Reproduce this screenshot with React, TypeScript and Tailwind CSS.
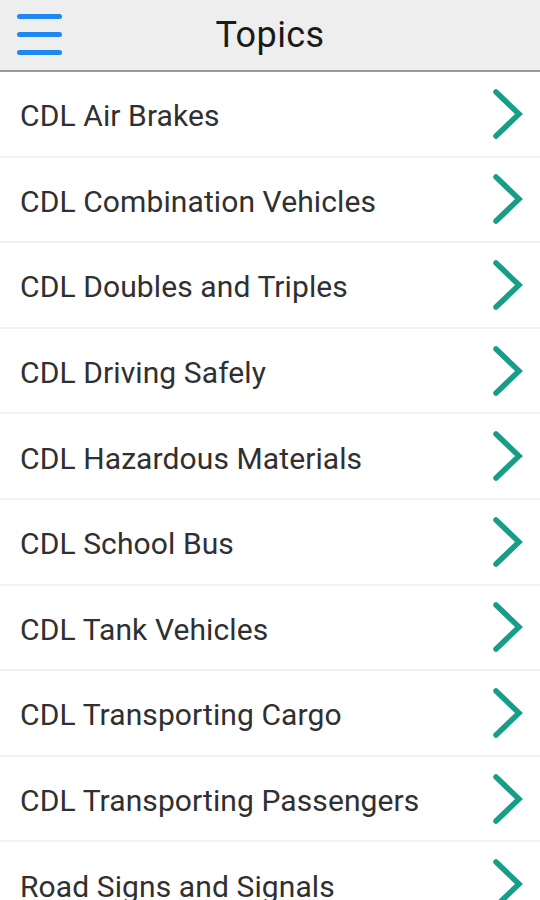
import React from 'react';

const topics = [
  'CDL Air Brakes',
  'CDL Combination Vehicles',
  'CDL Doubles and Triples',
  'CDL Driving Safely',
  'CDL Hazardous Materials',
  'CDL School Bus',
  'CDL Tank Vehicles',
  'CDL Transporting Cargo',
  'CDL Transporting Passengers',
  'Road Signs and Signals',
];

const Chevron = () => (
  <svg width="32" height="50" viewBox="0 0 32 50" className="shrink-0">
    <path d="M4 3 L27 25 L4 47" fill="none" stroke="#179e88" strokeWidth="5.5" strokeLinecap="round" strokeLinejoin="miter" />
  </svg>
);

export default function App() {
  return (
    <div className="w-[540px] h-[900px] overflow-hidden bg-white font-['Roboto',sans-serif]">
      <header className="relative h-[72px] bg-[#eeeeee] flex items-center justify-center border-b-[2px] border-[#9a9a9a]">
        <div className="absolute left-[17px] top-[14px] flex flex-col gap-[13px]">
          <span className="block w-[45px] h-[5px] rounded-full bg-[#1e88f5]" />
          <span className="block w-[45px] h-[5px] rounded-full bg-[#1e88f5]" />
          <span className="block w-[45px] h-[5px] rounded-full bg-[#1e88f5]" />
        </div>
        <h1 className="text-[36px] text-[#1a1a1a] tracking-[0.4px] leading-none">Topics</h1>
      </header>
      <ul>
        {topics.map((t) => (
          <li key={t} className="h-[85.6px] flex items-center justify-between pl-[20px] pr-[16px] border-b-[2px] border-[#f2f2f2]">
            <span className="pt-[4px] text-[30px] text-[#303030] tracking-[0.1px]">{t}</span>
            <Chevron />
          </li>
        ))}
      </ul>
    </div>
  );
}
